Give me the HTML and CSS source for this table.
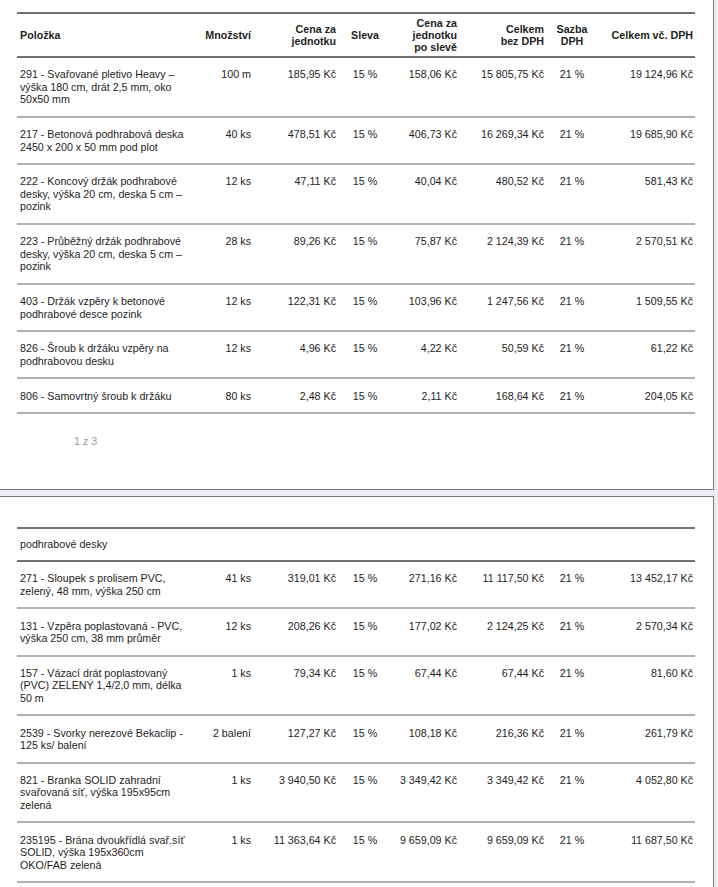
FILE: index.html
```html
<!DOCTYPE html>
<html lang="cs">
<head>
<meta charset="utf-8">
<title>Položky</title>
<link rel="stylesheet" href="styles.css">
</head>
<body>
<div class="page page-first">
  <table class="items">
    <colgroup>
      <col class="c-name"><col class="c-qty"><col class="c-price"><col class="c-disc"><col class="c-pdisc"><col class="c-net"><col class="c-vat"><col class="c-gross">
    </colgroup>
    <thead>
      <tr>
        <th class="l">Položka</th>
        <th class="r">Množství</th>
        <th class="r">Cena za<br>jednotku</th>
        <th class="c">Sleva</th>
        <th class="r">Cena za<br>jednotku<br>po slevě</th>
        <th class="r">Celkem<br>bez DPH</th>
        <th class="c">Sazba<br>DPH</th>
        <th class="r">Celkem vč. DPH</th>
      </tr>
    </thead>
    <tbody>
      <tr><td class="l">291 - Svařované pletivo Heavy – výška 180 cm, drát 2,5 mm, oko 50x50 mm</td><td class="r">100 m</td><td class="r">185,95 Kč</td><td class="c">15 %</td><td class="r">158,06 Kč</td><td class="r">15 805,75 Kč</td><td class="c">21 %</td><td class="r">19 124,96 Kč</td></tr>
      <tr><td class="l">217 - Betonová podhrabová deska 2450 x 200 x 50 mm pod plot</td><td class="r">40 ks</td><td class="r">478,51 Kč</td><td class="c">15 %</td><td class="r">406,73 Kč</td><td class="r">16 269,34 Kč</td><td class="c">21 %</td><td class="r">19 685,90 Kč</td></tr>
      <tr><td class="l">222 - Koncový držák podhrabové desky, výška 20 cm, deska 5 cm – pozink</td><td class="r">12 ks</td><td class="r">47,11 Kč</td><td class="c">15 %</td><td class="r">40,04 Kč</td><td class="r">480,52 Kč</td><td class="c">21 %</td><td class="r">581,43 Kč</td></tr>
      <tr><td class="l">223 - Průběžný držák podhrabové desky, výška 20 cm, deska 5 cm – pozink</td><td class="r">28 ks</td><td class="r">89,26 Kč</td><td class="c">15 %</td><td class="r">75,87 Kč</td><td class="r">2 124,39 Kč</td><td class="c">21 %</td><td class="r">2 570,51 Kč</td></tr>
      <tr><td class="l">403 - Držák vzpěry k betonové podhrabové desce pozink</td><td class="r">12 ks</td><td class="r">122,31 Kč</td><td class="c">15 %</td><td class="r">103,96 Kč</td><td class="r">1 247,56 Kč</td><td class="c">21 %</td><td class="r">1 509,55 Kč</td></tr>
      <tr><td class="l">826 - Šroub k držáku vzpěry na podhrabovou desku</td><td class="r">12 ks</td><td class="r">4,96 Kč</td><td class="c">15 %</td><td class="r">4,22 Kč</td><td class="r">50,59 Kč</td><td class="c">21 %</td><td class="r">61,22 Kč</td></tr>
      <tr><td class="l">806 - Samovrtný šroub k držáku</td><td class="r">80 ks</td><td class="r">2,48 Kč</td><td class="c">15 %</td><td class="r">2,11 Kč</td><td class="r">168,64 Kč</td><td class="c">21 %</td><td class="r">204,05 Kč</td></tr>
    </tbody>
  </table>
  <div class="footer">1 z 3</div>
</div>
<div class="page page-next">
  <table class="items">
    <colgroup>
      <col class="c-name"><col class="c-qty"><col class="c-price"><col class="c-disc"><col class="c-pdisc"><col class="c-net"><col class="c-vat"><col class="c-gross">
    </colgroup>
    <tbody>
      <tr class="group"><td class="l" colspan="8">podhrabové desky</td></tr>
      <tr><td class="l">271 - Sloupek s prolisem PVC, zelený, 48 mm, výška 250 cm</td><td class="r">41 ks</td><td class="r">319,01 Kč</td><td class="c">15 %</td><td class="r">271,16 Kč</td><td class="r">11 117,50 Kč</td><td class="c">21 %</td><td class="r">13 452,17 Kč</td></tr>
      <tr><td class="l">131 - Vzpěra poplastovaná - PVC, výška 250 cm, 38 mm průměr</td><td class="r">12 ks</td><td class="r">208,26 Kč</td><td class="c">15 %</td><td class="r">177,02 Kč</td><td class="r">2 124,25 Kč</td><td class="c">21 %</td><td class="r">2 570,34 Kč</td></tr>
      <tr><td class="l">157 - Vázací drát poplastovaný (PVC) ZELENÝ 1,4/2,0 mm, délka 50 m</td><td class="r">1 ks</td><td class="r">79,34 Kč</td><td class="c">15 %</td><td class="r">67,44 Kč</td><td class="r">67,44 Kč</td><td class="c">21 %</td><td class="r">81,60 Kč</td></tr>
      <tr><td class="l">2539 - Svorky nerezové Bekaclip - 125 ks/ balení</td><td class="r">2 balení</td><td class="r">127,27 Kč</td><td class="c">15 %</td><td class="r">108,18 Kč</td><td class="r">216,36 Kč</td><td class="c">21 %</td><td class="r">261,79 Kč</td></tr>
      <tr><td class="l">821 - Branka SOLID zahradní svařovaná síť, výška 195x95cm zelená</td><td class="r">1 ks</td><td class="r">3 940,50 Kč</td><td class="c">15 %</td><td class="r">3 349,42 Kč</td><td class="r">3 349,42 Kč</td><td class="c">21 %</td><td class="r">4 052,80 Kč</td></tr>
      <tr><td class="l">235195 - Brána dvoukřídlá svař.síť SOLID, výška 195x360cm OKO/FAB zelená</td><td class="r">1 ks</td><td class="r">11 363,64 Kč</td><td class="c">15 %</td><td class="r">9 659,09 Kč</td><td class="r">9 659,09 Kč</td><td class="c">21 %</td><td class="r">11 687,50 Kč</td></tr>
    </tbody>
  </table>
</div>
</body>
</html>
```

FILE: styles.css
```css
html, body {
  margin: 0;
  padding: 0;
}
body {
  background: #eeeef2;
  font-family: "Liberation Sans", Arial, sans-serif;
  font-size: 10.7px;
  color: #1e1e1e;
  overflow: hidden;
}
.page {
  width: 713px;
  margin-left: -1px;
  background: #fff;
  border: 1px solid #7a7a7a;
}
.page-first {
  border-top: none;
  padding-top: 12px;
}
.page-next {
  margin-top: 6px;
  padding-top: 30px;
  height: 600px;
}
.items {
  margin-left: 17px;
  width: 678px;
  table-layout: fixed;
  border-collapse: separate;
  border-spacing: 0;
}
.c-name { width: 183px; }
.c-qty { width: 53px; }
.c-price { width: 85px; }
.c-disc { width: 54px; }
.c-pdisc { width: 67px; }
.c-net { width: 87px; }
.c-vat { width: 52px; }
.c-gross { width: 97px; }
.items th {
  font-weight: bold;
  line-height: 12px;
  padding: 3px 2px;
  vertical-align: middle;
  border-top: 2px solid #707070;
  border-bottom: 2px solid #707070;
}
.items td {
  line-height: 12.5px;
  padding: 10.4px 2px 9.9px;
  vertical-align: top;
  border-bottom: 2px solid #b4b4b4;
}
.items .l {
  text-align: left;
  padding-left: 3px;
  padding-right: 12px;
}
.items .r { text-align: right; }
.items .c { text-align: center; }
.items tr.group td {
  border-top: 2px solid #707070;
  border-bottom: 2px solid #707070;
  padding-top: 9.5px;
  padding-bottom: 9px;
}
.footer {
  color: #999;
  line-height: 13px;
  padding: 21px 0 41px 74px;
}
```
